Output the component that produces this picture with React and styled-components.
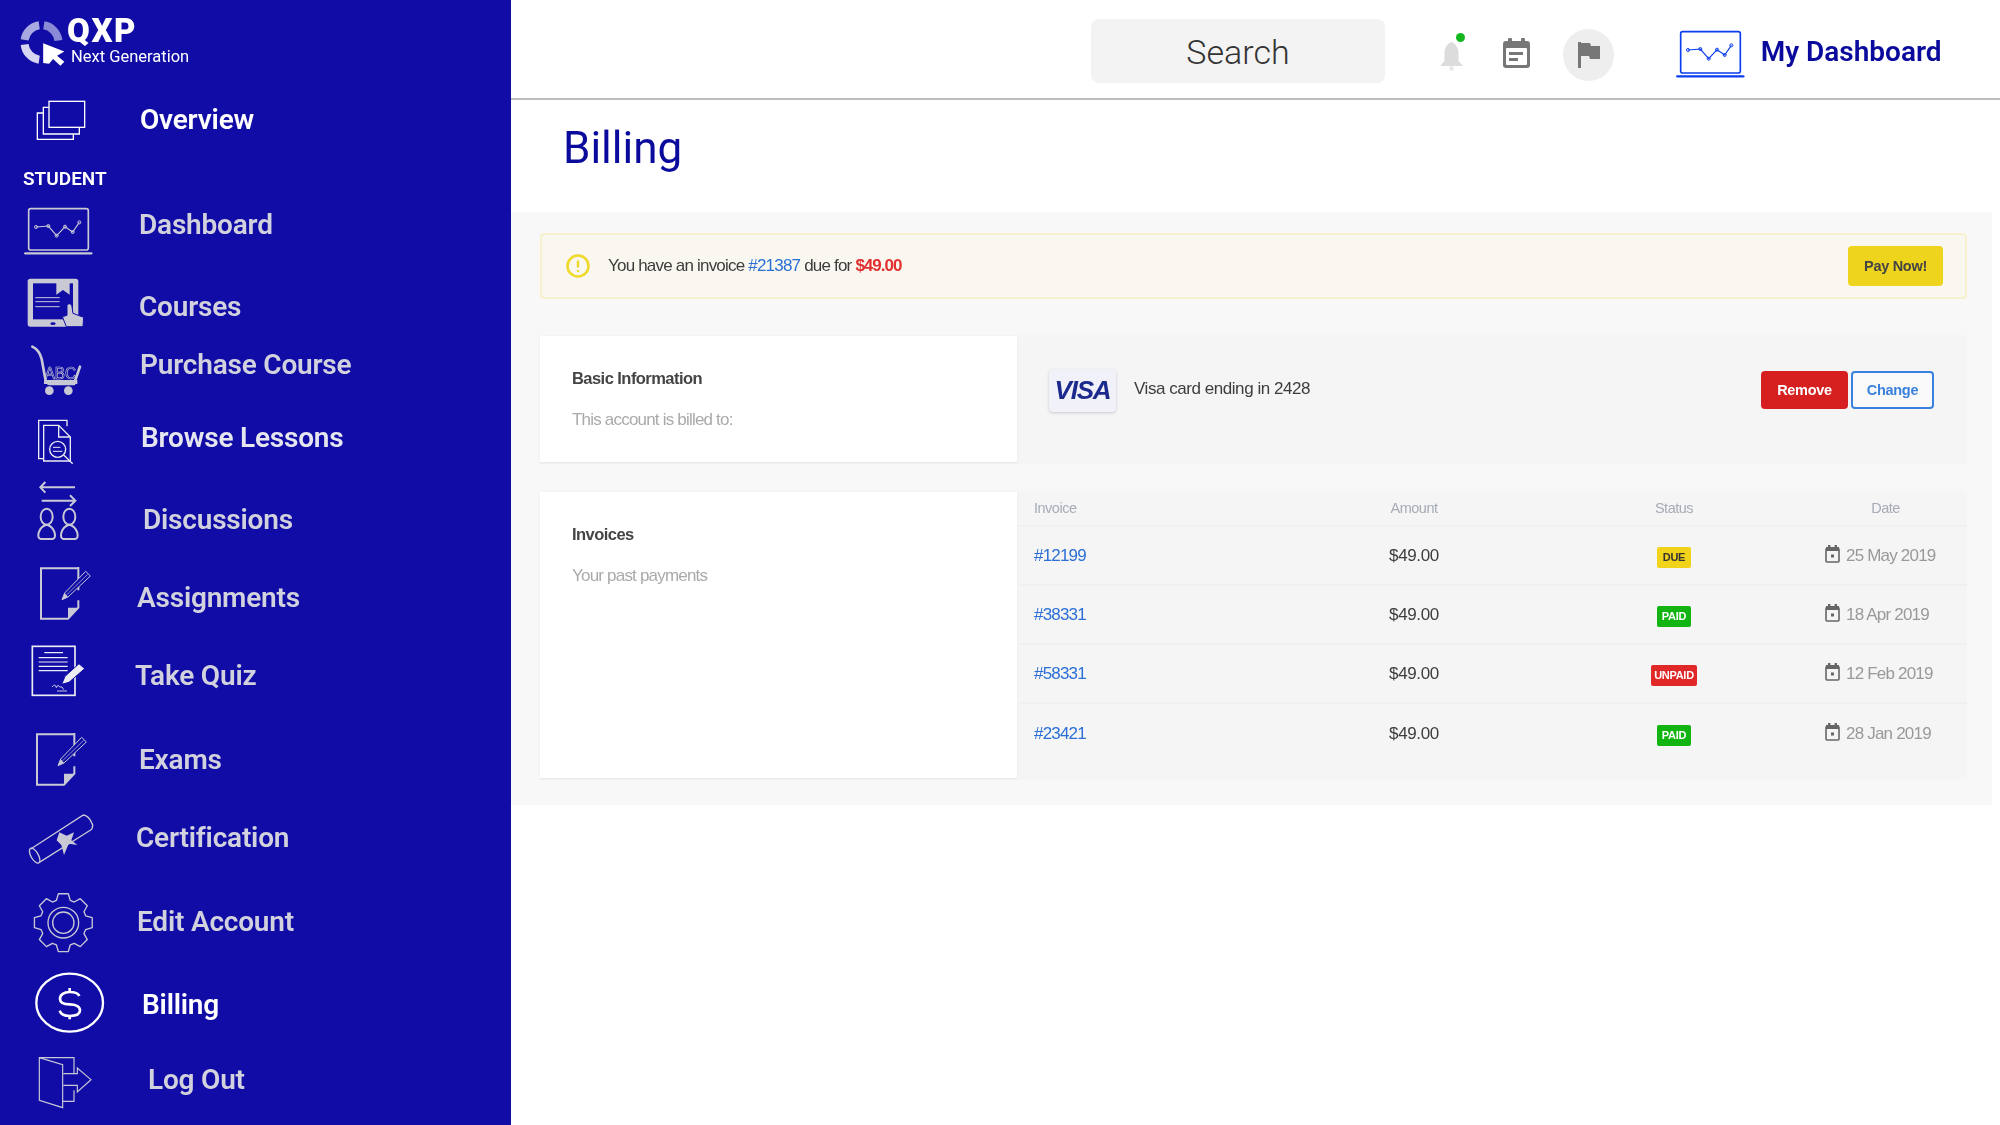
import React from 'react';
import styled, { createGlobalStyle } from 'styled-components';

const G = '#c9c9d6';
const NAVY = '#100ca5';

const Global = createGlobalStyle`
  html, body { margin: 0; padding: 0; background: #fff; }
  #root { width: 2000px; height: 1125px; overflow: hidden; }
  * { box-sizing: border-box; }
`;

const Shell = styled.div`
  display: flex;
  width: 2000px;
  height: 1125px;
  font-family: "Liberation Sans", Arial, sans-serif;
`;
const Sidebar = styled.aside`
  width: 511px;
  height: 1125px;
  flex: none;
  background: ${NAVY};
  font-family: Roboto, sans-serif;
  filter: blur(0.4px);
`;
const Brand = styled.div`
  display: flex;
  align-items: flex-start;
  height: 100px;
  padding: 17px 0 0 19px;
  color: #fff;
  svg { margin-top: 3px; }
`;
const BrandText = styled.div`
  display: flex;
  flex-direction: column;
  margin-left: 0;
`;
const BrandName = styled.span`
  font-size: 33px;
  font-weight: 900;
  line-height: 28px;
  letter-spacing: 1.6px;
`;
const BrandSub = styled.span`
  font-size: 16.5px;
  line-height: 24px;
  margin-left: 4px;
`;
const Section = styled.div`
  height: 67px;
  padding: 29px 0 0 23px;
  color: #fff;
  font-size: 19px;
  font-weight: 600;
  line-height: 20px;
`;
const NavRow = styled.div`
  display: flex;
  align-items: center;
  height: ${p => p.$h}px;
  margin-top: ${p => p.$gap}px;
`;
const NavIcon = styled.div`
  flex: none;
  width: ${p => p.$labelX}px;
  padding-left: ${p => p.$iconX}px;
  display: flex;
  svg { display: block; overflow: visible; }
`;
const NavLabel = styled.span`
  margin-top: ${p => p.$dy * 2}px;
  font-size: 28px;
  font-weight: 600;
  letter-spacing: -0.2px;
  line-height: 34px;
  white-space: nowrap;
  color: ${p => p.$color};
`;

const Content = styled.main`
  flex: 1;
  min-width: 0;
  display: flex;
  flex-direction: column;
`;
const TopBar = styled.header`
  height: 100px;
  flex: none;
  display: flex;
  align-items: flex-start;
  border-bottom: 2px solid #bcbcbc;
  filter: blur(0.4px);
`;
const SearchBox = styled.div`
  margin: 19px 0 0 580px;
  width: 294px;
  height: 64px;
  border-radius: 8px;
  background: #f3f3f3;
  color: #333;
  display: flex;
  align-items: center;
  justify-content: center;
  font-family: Roboto, sans-serif;
  font-size: 34px;
  font-weight: 300;
  padding-top: 2px;
`;
const TopIcon = styled.div`
  position: relative;
  display: flex;
  margin: ${p => p.$t}px 0 0 ${p => p.$l}px;
  svg { display: block; }
`;
const GreenDot = styled.span`
  position: absolute;
  top: -8px;
  right: 0;
  width: 9px;
  height: 9px;
  border-radius: 50%;
  background: #14b81e;
`;
const FlagCircle = styled.div`
  width: 51px;
  height: 52px;
  margin: 29px 0 0 33px;
  border-radius: 50%;
  background: #eeeeee;
  display: flex;
  align-items: center;
  justify-content: center;
`;
const MyDash = styled.span`
  margin: 34px 0 0 16px;
  font-family: Roboto, sans-serif;
  font-size: 28px;
  line-height: 36px;
  font-weight: 600;
  color: #0a0a9c;
`;
const Title = styled.h1`
  margin: 0;
  height: 112px;
  padding: 22px 0 0 52px;
  font-family: Roboto, sans-serif;
  font-weight: 400;
  font-size: 44px;
  line-height: 52px;
  color: #0a0a9c;
  filter: blur(0.4px);
`;
const Panel = styled.section`
  width: 1481px;
  height: 593px;
  padding: 21px 25px 0 29px;
  background: #f8f8f8;
  filter: blur(0.55px);
  font-size: 17px;
  letter-spacing: -0.8px;
  color: #3d3d3d;
`;
const Alert = styled.div`
  height: 66px;
  display: flex;
  align-items: center;
  padding: 0 22px 0 24px;
  background: #f9f7ef;
  border: 2px solid #f8f1cd;
  border-radius: 4px;
`;
const AlertText = styled.span`
  flex: 1;
  margin-left: 18px;
`;
const Link = styled.span`
  color: #2b6fd6;
`;
const Amount = styled.span`
  color: #e03030;
  font-weight: 700;
  letter-spacing: -1px;
`;
const Button = styled.div`
  display: flex;
  align-items: center;
  justify-content: center;
  width: ${p => p.$w}px;
  height: ${p => p.$height}px;
  border-radius: 4px;
  font-size: 14.5px;
  letter-spacing: -0.3px;
  font-weight: 700;
  background: ${p => p.$bg};
  color: ${p => p.$fg};
  border: ${p => (p.$line ? `2px solid ${p.$line}` : 'none')};
`;
const Card = styled.div`
  display: flex;
  height: ${p => p.$h}px;
  margin-top: ${p => p.$gap}px;
  background: #f5f5f5;
  border-radius: 3px;
`;
const CardLeft = styled.div`
  flex: none;
  width: 477px;
  margin: 1px 0 2px;
  padding: 32px 32px 0;
  background: #fff;
  box-shadow: 0 1px 2px rgba(0,0,0,.07);
`;
const CardTitle = styled.div`
  font-size: 16.5px;
  font-weight: 700;
  letter-spacing: -0.55px;
  line-height: 20px;
  color: #444;
`;
const CardSub = styled.div`
  margin-top: 22px;
  line-height: 20px;
  color: #aaa;
`;
const PayRow = styled.div`
  flex: 1;
  display: flex;
  align-items: flex-start;
  padding: 34px 33px 0 32px;
`;
const VisaChip = styled.div`
  width: 67px;
  height: 43px;
  display: flex;
  align-items: center;
  justify-content: center;
  background: #f1f1f9;
  border-radius: 4px;
  box-shadow: 0 1px 3px rgba(0,0,0,.18);
  color: #1b2a8c;
  font-size: 26px;
  font-weight: 700;
  font-style: italic;
  letter-spacing: -1.2px;
`;
const VisaText = styled.span`
  flex: 1;
  margin-left: 18px;
  line-height: 40px;
  letter-spacing: -0.45px;
`;
const PayButtons = styled.div`
  display: flex;
  gap: 3px;
  margin-top: 2px;
`;
const Table = styled.div`
  flex: 1;
  display: flex;
  flex-direction: column;
`;
const TableRow = styled.div`
  flex: none;
  display: grid;
  grid-template-columns: 273px 248px 272px 1fr;
  align-items: center;
  height: ${p => p.$h}px;
  border-bottom: 2px solid #f0f0f0;
  &:last-child { border-bottom: none; }
`;
const Th = styled.div`
  font-size: 14.5px;
  letter-spacing: -0.5px;
  color: #a6abb6;
  text-align: ${p => p.$align || 'center'};
  padding-left: ${p => p.$pl || 0}px;
  padding-right: ${p => p.$pr || 0}px;
`;
const Td = styled.div`
  display: flex;
  align-items: center;
  justify-content: ${p => p.$justify || 'center'};
  padding-left: ${p => p.$pl || 0}px;
  color: ${p => p.$color || '#3d3d3d'};
`;
const Price = styled.span`
  letter-spacing: -0.35px;
`;
const Badge = styled.span`
  margin-top: 3px;
  height: 21px;
  padding: 0 ${p => p.$px}px;
  display: flex;
  align-items: center;
  border-radius: 2px;
  font-size: 11px;
  letter-spacing: -0.3px;
  font-weight: 700;
  background: ${p => p.$bg};
  color: ${p => p.$fg};
`;
const DateText = styled.span`
  margin-left: 6px;
  color: #999;
`;
const CalWrap = styled.span`
  display: flex;
  margin-top: -3px;
`;

/* ---------- icons: coordinates are in 3x px ---------- */
const Ic = ({ vb, children, fill = 'none', stroke = G, sw = 4, ...r }) => {
  const [, , w, h] = vb.split(' ').map(Number);
  return (
    <svg viewBox={vb} width={w / 3} height={h / 3} fill={fill} stroke={stroke} strokeWidth={sw} {...r}>
      {children}
    </svg>
  );
};

const Logo = () => (
  <svg viewBox="55 60 145 145" width="48" height="48">
    <g fill="none" strokeWidth="24">
      <path d="M72 120 A52 52 0 0 1 116 76" stroke="#a9a9e2" />
      <path d="M130 76 A52 52 0 0 1 174 122" stroke="#8a8ad6" />
      <path d="M72 134 A52 52 0 0 0 116 180" stroke="#d6d6f2" />
    </g>
    <path d="M128 130 L192 155 L170 168 L192 186 L180 198 L158 178 L146 192 L128 190 Z" fill="#fff" />
  </svg>
);
const Overview = () => (
  <Ic vb="108 296 150 122" stroke="#fff">
    <rect x="147" y="300" width="107" height="78" />
    <path d="M147 318 H130 V398 H238 V378" />
    <path d="M130 335 H112 V414 H220 V398" />
  </Ic>
);
const Chart = ({ c = G, line = G }) => (
  <>
    <rect x="86" y="623" width="179" height="124" rx="6" stroke={c} strokeWidth="5" />
    <path d="M76 757 H274" stroke={c} strokeWidth="7" strokeLinecap="round" />
    <path d="M108 678 L145 675 L170 704 L195 677 L218 693 L238 664" stroke={line} strokeWidth="3.5" />
    {[[108, 678], [145, 675], [170, 704], [195, 677], [218, 693], [238, 664]].map(([x, y]) => (
      <circle key={x} cx={x} cy={y} r="4.5" stroke={line} strokeWidth="3" />
    ))}
  </>
);
const Dashboard = () => <Ic vb="72 618 206 146"><Chart /></Ic>;
const Courses = () => (
  <Ic vb="80 834 172 148" stroke="none">
    <rect x="82" y="836" width="152" height="144" rx="8" fill={G} />
    <rect x="98" y="850" width="120" height="108" fill={NAVY} />
    <path d="M168 848 V884 L188 870 L208 884 V848 Z" fill={G} />
    <path d="M105 893 H178 M105 905 H178 M105 920 H178" stroke={G} strokeWidth="3" />
    <ellipse cx="158" cy="971" rx="8" ry="4" fill={NAVY} />
    <path d="M200 914 Q206 908 214 914 L218 940 L250 952 L248 980 L198 980 L186 950 L200 946 Z" fill={G} stroke={NAVY} strokeWidth="3" />
  </Ic>
);
const Cart = () => (
  <Ic vb="90 1033 156 152" sw="8">
    <path d="M97 1038 Q118 1048 125 1075 L135 1130 Q138 1150 150 1150 L222 1150 L240 1098" strokeLinecap="round" />
    <text x="134" y="1134" fontFamily="Liberation Sans" fontSize="50" textLength="94" lengthAdjust="spacingAndGlyphs" fill="none" stroke={G} strokeWidth="2">ABC</text>
    <path d="M132 1138 H232 V1150 H132 Z" fill={G} stroke="none" />
    <circle cx="148" cy="1170" r="13" fill={G} stroke="none" />
    <circle cx="205" cy="1170" r="13" fill={G} stroke="none" />
  </Ic>
);
const Browse = () => (
  <Ic vb="110 146 112 138" stroke="#ececf4" sw="4">
    <path d="M130 265 H115 V150 H200 V168" />
    <path d="M130 165 H175 L210 200 V272 H130 Z" />
    <path d="M175 165 V200 H210" />
    <circle cx="172" cy="237" r="24" fill={NAVY} />
    <path d="M158 231 H180 M158 243 H186" strokeWidth="3" />
    <path d="M190 254 L217 280" />
  </Ic>
);
const Discussions = () => (
  <Ic vb="108 330 130 182" sw="6">
    <path d="M122 352 H225 M136 336 L121 352 L136 368" />
    <path d="M125 392 H225 M210 376 L226 392 L210 408" />
    {[0, 68].map(dx => (
      <g key={dx} transform={`translate(${dx} 0)`}>
        <ellipse cx="140" cy="440" rx="18" ry="24" />
        <path d="M122 507 Q112 505 116 488 Q122 468 140 464 Q158 468 164 488 Q168 505 158 507 Z" />
      </g>
    ))}
  </Ic>
);
const Pencildoc = () => (
  <Ic vb="118 590 156 160" sw="6">
    <path d="M236 660 V590 M236 594 H124 V745 H205 L236 712 V690" />
    <path d="M236 712 H205 V745 Z" fill={G} stroke="none" />
    <path d="M258 603 L272 617 L205 680 L187 688 L195 668 Z" fill={NAVY} strokeWidth="3" />
    <path d="M264 612 L200 674" strokeWidth="2" />
    <path d="M187 688 L195 668 L205 680 Z" fill={G} stroke="none" />
  </Ic>
);
const Quiz = () => (
  <Ic vb="92 824 162 154" stroke="#ececf4" sw="5">
    <rect x="96" y="828" width="128" height="147" />
    <path d="M132 847 H188 M115 862 H202 M115 875 H202 M115 888 H202 M115 901 H202" strokeWidth="3.5" />
    <path d="M236 880 L253 895 L206 936 L184 942 L194 918 Z" fill="#ececf4" stroke={NAVY} strokeWidth="3" />
    <path d="M155 950 Q165 938 168 952 Q172 940 178 950 Q186 946 190 958 M170 962 H200" strokeWidth="2.5" />
  </Ic>
);
const Cert = () => (
  <Ic vb="84 204 198 156" sw="4">
    <path d="M92 312 L250 210 Q268 212 278 240 Q278 252 272 255 L118 352" />
    <ellipse cx="104" cy="332" rx="11" ry="25" transform="rotate(-30 104 332)" />
    <path d="M178 262 L200 272 L222 262 L214 286 L232 300 L206 296 L192 330 L184 300 L170 286 Z" fill={G} stroke="none" />
  </Ic>
);
const gearPath = () => {
  const cx = 190, cy = 533, n = 8, R = 88, r = 70;
  let d = '';
  for (let i = 0; i < n; i++) {
    const a = (i / n) * Math.PI * 2 - Math.PI / 2;
    const pts = [[r, -0.3], [R, -0.17], [R, 0.17], [r, 0.3]];
    pts.forEach(([q, o], k) => {
      const x = cx + q * Math.cos(a + o), y = cy + q * Math.sin(a + o);
      d += `${i === 0 && k === 0 ? 'M' : 'L'}${x.toFixed(1)} ${y.toFixed(1)} `;
    });
  }
  return d + 'Z';
};
const Gear = () => (
  <Ic vb="96 441 188 184" sw="4">
    <path d={gearPath()} strokeLinejoin="round" />
    <circle cx="190" cy="533" r="46" />
    <circle cx="190" cy="533" r="32" />
  </Ic>
);
const Dollar = () => (
  <Ic vb="100 680 214 184" stroke="#fff" sw="7">
    <ellipse cx="207" cy="772" rx="100" ry="87" />
    <path d="M236 752 C232 742 222 740 207 740 C190 740 178 748 178 760 C178 772 190 777 207 777 C224 777 238 783 238 795 C238 807 224 812 207 812 C192 812 180 806 177 796 M207 728 V740 M207 812 V822" strokeWidth="8" />
  </Ic>
);
const LogOut = () => (
  <Ic vb="114 932 164 160" sw="3.5">
    <path d="M118 937 L188 958 V1087 L118 1065 Z" />
    <path d="M118 937 H222 V985 M222 1035 V1068 H188" />
    <path d="M190 985 H232 V968 L273 1003 L232 1040 V1020 H190" />
  </Ic>
);

const Bell = () => (
  <svg viewBox="0 0 27 30" width="27" height="30">
    <path d="M13.5 1 C9 3 6.5 7 6.5 12 V20 L2 25 H25 L20.5 20 V12 C20.5 7 18 3 13.5 1 Z" fill="#dcdcdc" />
    <circle cx="13.5" cy="27.5" r="2.2" fill="#e6e6e6" />
  </svg>
);
const Calendar = () => (
  <svg viewBox="0 0 27 30" width="27" height="30">
    <rect x="0" y="3" width="27" height="27" rx="3" fill="#777" />
    <rect x="5" y="0" width="4" height="6" rx="1" fill="#777" />
    <rect x="18" y="0" width="4" height="6" rx="1" fill="#777" />
    <rect x="3" y="10" width="21" height="17" rx="1" fill="#fff" />
    <rect x="6" y="14" width="14" height="3" fill="#777" />
    <rect x="6" y="20" width="9" height="3" fill="#777" />
  </svg>
);
const Flag = () => (
  <svg viewBox="0 0 22 26" width="22" height="26">
    <rect x="0" y="0" width="3" height="26" fill="#777" />
    <path d="M3 1 H12 L13 4 H22 V17 H12 L11 14 H3 Z" fill="#777" />
  </svg>
);
const AlertIcon = () => (
  <svg viewBox="0 0 24 24" width="24" height="24" fill="none">
    <circle cx="12" cy="12" r="10.5" stroke="#efd92b" strokeWidth="2.6" />
    <path d="M12 6.5 V13.5 M12 16 V18" stroke="#efd92b" strokeWidth="2.4" />
  </svg>
);
const SmallCal = () => (
  <svg viewBox="0 0 15 18" width="15" height="18" fill="none">
    <rect x="1" y="3.5" width="13" height="13.5" rx="1" stroke="#666" strokeWidth="1.6" />
    <rect x="1" y="2" width="13" height="4" fill="#666" />
    <rect x="3" y="0" width="2.4" height="3" fill="#666" />
    <rect x="9.6" y="0" width="2.4" height="3" fill="#666" />
    <rect x="6" y="9.5" width="3" height="3" fill="#666" />
  </svg>
);

const nav = [
  { label: 'Overview', icon: Overview, iconX: 36, labelX: 140, h: 40, gap: 0, color: '#fff' },
  { section: 'STUDENT' },
  { label: 'Dashboard', icon: Dashboard, iconX: 24, labelX: 139, h: 48, gap: 0, dy: -6, color: '#d2d2de' },
  { label: 'Courses', icon: Courses, iconX: 27, labelX: 139, h: 49, gap: 23, dy: 4, color: '#d2d2de' },
  { label: 'Purchase Course', icon: Cart, iconX: 30, labelX: 140, h: 50, gap: 18, dy: -5, color: '#d2d2de' },
  { label: 'Browse Lessons', icon: Browse, iconX: 37, labelX: 141, h: 45, gap: 24, dy: -4, color: '#e6e6f0' },
  { label: 'Discussions', icon: Discussions, iconX: 36, labelX: 143, h: 60, gap: 16, dy: 10, color: '#d2d2de' },
  { label: 'Assignments', icon: Pencildoc, iconX: 39, labelX: 137, h: 53, gap: 27, dy: 4, color: '#d2d2de' },
  { label: 'Take Quiz', icon: Quiz, iconX: 31, labelX: 135, h: 51, gap: 25, dy: 5, color: '#d2d2de' },
  { label: 'Exams', icon: Pencildoc, iconX: 35, labelX: 139, h: 53, gap: 37, dy: 0, color: '#d2d2de' },
  { label: 'Certification', icon: Cert, iconX: 28, labelX: 136, h: 50, gap: 28, dy: -1, color: '#d2d2de' },
  { label: 'Edit Account', icon: Gear, iconX: 32, labelX: 137, h: 60, gap: 29, dy: -1, color: '#d2d2de' },
  { label: 'Billing', icon: Dollar, iconX: 34, labelX: 142, h: 60, gap: 20, dy: 2, color: '#fff' },
  { label: 'Log Out', icon: LogOut, iconX: 38, labelX: 148, h: 52, gap: 24, dy: -3, color: '#d2d2de' },
];

const invoices = [
  { id: '#12199', status: 'DUE', bg: '#f2d31b', fg: '#333', px: 6, date: '25 May 2019' },
  { id: '#38331', status: 'PAID', bg: '#12b412', fg: '#fff', px: 5, date: '18 Apr 2019' },
  { id: '#58331', status: 'UNPAID', bg: '#e02828', fg: '#fff', px: 3, date: '12 Feb 2019' },
  { id: '#23421', status: 'PAID', bg: '#12b412', fg: '#fff', px: 5, date: '28 Jan 2019' },
];

export default function App() {
  return (
    <Shell>
      <Global />
      <Sidebar>
        <Brand>
          <Logo />
          <BrandText>
            <BrandName>QXP</BrandName>
            <BrandSub>Next Generation</BrandSub>
          </BrandText>
        </Brand>
        {nav.map(n =>
          n.section ? (
            <Section key={n.section}>{n.section}</Section>
          ) : (
            <NavRow key={n.label} $h={n.h} $gap={n.gap}>
              <NavIcon $iconX={n.iconX} $labelX={n.labelX}><n.icon /></NavIcon>
              <NavLabel $dy={n.dy || 0} $color={n.color}>{n.label}</NavLabel>
            </NavRow>
          )
        )}
      </Sidebar>
      <Content>
        <TopBar>
          <SearchBox>Search</SearchBox>
          <TopIcon $t={41} $l={53}><Bell /><GreenDot /></TopIcon>
          <TopIcon $t={38} $l={38}><Calendar /></TopIcon>
          <FlagCircle><Flag /></FlagCircle>
          <TopIcon $t={30} $l={62}>
            <Ic vb="72 618 206 146" sw="4"><Chart c="#0a3cf0" line="#0a3cf0" /></Ic>
          </TopIcon>
          <MyDash>My Dashboard</MyDash>
        </TopBar>
        <Title>Billing</Title>
        <Panel>
          <Alert>
            <AlertIcon />
            <AlertText>You have an invoice <Link>#21387</Link> due for <Amount>$49.00</Amount></AlertText>
            <Button $w={95} $height={40} $bg="#eed41c" $fg="#444">Pay Now!</Button>
          </Alert>
          <Card $h={129} $gap={36}>
            <CardLeft>
              <CardTitle>Basic Information</CardTitle>
              <CardSub>This account is billed to:</CardSub>
            </CardLeft>
            <PayRow>
              <VisaChip>VISA</VisaChip>
              <VisaText>Visa card ending in 2428</VisaText>
              <PayButtons>
                <Button $w={87} $height={38} $bg="#d62020" $fg="#fff">Remove</Button>
                <Button $w={83} $height={38} $bg="#f9f9f9" $fg="#3a80dd" $line="#3a80dd">Change</Button>
              </PayButtons>
            </PayRow>
          </Card>
          <Card $h={289} $gap={27}>
            <CardLeft>
              <CardTitle>Invoices</CardTitle>
              <CardSub>Your past payments</CardSub>
            </CardLeft>
            <Table>
              <TableRow $h={36}>
                <Th $align="left" $pl={17}>Invoice</Th>
                <Th>Amount</Th>
                <Th>Status</Th>
                <Th $pr={6}>Date</Th>
              </TableRow>
              {invoices.map(r => (
                <TableRow key={r.id} $h={59}>
                  <Td $justify="flex-start" $pl={17} $color="#2b6fd6">{r.id}</Td>
                  <Td><Price>$49.00</Price></Td>
                  <Td><Badge $bg={r.bg} $fg={r.fg} $px={r.px}>{r.status}</Badge></Td>
                  <Td $justify="flex-start" $pl={15}><CalWrap><SmallCal /></CalWrap><DateText>{r.date}</DateText></Td>
                </TableRow>
              ))}
            </Table>
          </Card>
        </Panel>
      </Content>
    </Shell>
  );
}
